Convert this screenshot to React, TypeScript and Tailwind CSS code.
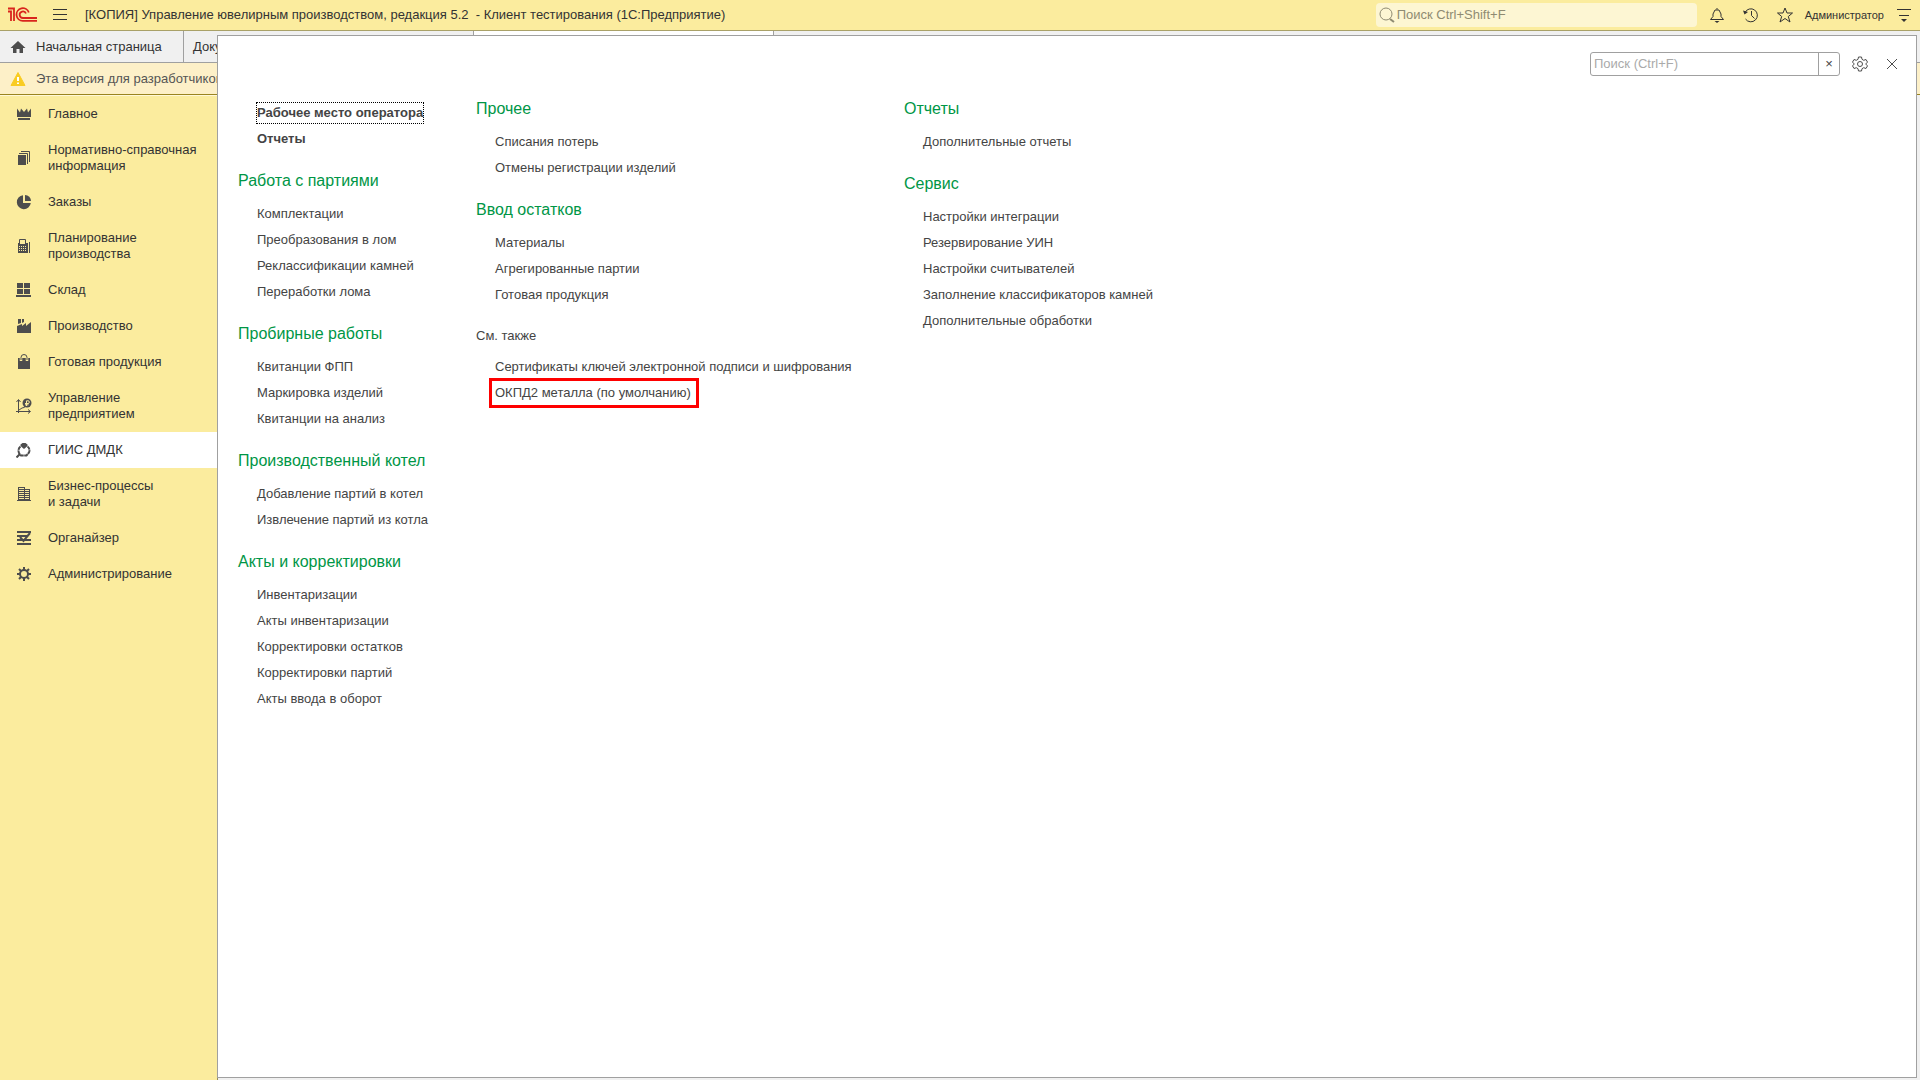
import type { ReactNode } from "react";

type Section = { title?: string; minor?: boolean; bold?: boolean; items: string[] };

const COLUMNS: Section[][] = [
  [
    { bold: true, items: ["Рабочее место оператора", "Отчеты"] },
    {
      title: "Работа с партиями",
      items: ["Комплектации", "Преобразования в лом", "Реклассификации камней", "Переработки лома"],
    },
    { title: "Пробирные работы", items: ["Квитанции ФПП", "Маркировка изделий", "Квитанции на анализ"] },
    { title: "Производственный котел", items: ["Добавление партий в котел", "Извлечение партий из котла"] },
    {
      title: "Акты и корректировки",
      items: [
        "Инвентаризации",
        "Акты инвентаризации",
        "Корректировки остатков",
        "Корректировки партий",
        "Акты ввода в оборот",
      ],
    },
  ],
  [
    { title: "Прочее", items: ["Списания потерь", "Отмены регистрации изделий"] },
    { title: "Ввод остатков", items: ["Материалы", "Агрегированные партии", "Готовая продукция"] },
    {
      title: "См. также",
      minor: true,
      items: ["Сертификаты ключей электронной подписи и шифрования", "ОКПД2 металла (по умолчанию)"],
    },
  ],
  [
    { title: "Отчеты", items: ["Дополнительные отчеты"] },
    {
      title: "Сервис",
      items: [
        "Настройки интеграции",
        "Резервирование УИН",
        "Настройки считывателей",
        "Заполнение классификаторов камней",
        "Дополнительные обработки",
      ],
    },
  ],
];

const FOCUSED = "Рабочее место оператора";
const MARKED = "ОКПД2 металла (по умолчанию)";
const ACTIVE = "ГИИС ДМДК";

const INK = "#4d4d4d";
const PAPER = "#fbec9e";

function Glyph({ children }: { children: ReactNode }) {
  return (
    <svg width="16" height="16" viewBox="0 0 16 16" fill="none" aria-hidden="true" className="shrink-0">
      {children}
    </svg>
  );
}

const NAV: { label: string; icon: ReactNode }[] = [
  {
    label: "Главное",
    icon: <path d="M1 2.5L4 6.5 5 2.5 8 6l3-3.500 1 4 3-4V11H1zM2 12h12v2H2z" fill={INK} />,
  },
  {
    label: "Нормативно-справочная\nинформация",
    icon: (
      <>
        <path d="M2 5h8v10H2z" fill={INK} />
        <path d="M3 3.5h8.500V14M5 1.5h8.500V12" stroke={INK} />
      </>
    ),
  },
  {
    label: "Заказы",
    icon: (
      <>
        <path d="M7 1.200A7 7 0 1 0 14.800 9H7z" fill={INK} />
        <path d="M9 1a6 6 0 0 1 6 6H9z" fill={INK} />
      </>
    ),
  },
  {
    label: "Планирование\nпроизводства",
    icon: (
      <>
        <path d="M3.500 1.500h6V6h-6z" stroke={INK} />
        <path d="M2 5h10v10H2z" fill={INK} />
        <path d="M4 3h5v3H4z" fill={PAPER} />
        <path d="M3 8.500h8M3 10.500h8M3 12.500h8" stroke={PAPER} strokeDasharray="1 1" />
        <path d="M13.500 4v11" stroke={INK} />
      </>
    ),
  },
  {
    label: "Склад",
    icon: <path d="M1 1h6v5H1zM8 1h6v5H8zM1 7h6v5H1zM8 7h6v5H8zM0 13h15v2H0z" fill={INK} />,
  },
  {
    label: "Производство",
    icon: <path d="M1 15V8l5-2v2l4-3v3l5-4v11zM2 1h3v4L2 6zM6 1h2v3l-2 1z" fill={INK} />,
  },
  {
    label: "Готовая продукция",
    icon: (
      <>
        <path d="M2 4h12v11H2z" fill={INK} />
        <path d="M5 7V4a3 3 0 0 1 6 0v3" stroke={PAPER} strokeWidth="2.500" />
        <path d="M5 6V3.500a3 3 0 0 1 6 0V6" stroke={INK} />
      </>
    ),
  },
  {
    label: "Управление\nпредприятием",
    icon: (
      <>
        <path d="M2.500 15V2M.5 4l2-2.500 2 2.500M0 13.500h14M12 11.500l2.500 2-2.500 2M3 12l3-2 2-.5 2-1.500" stroke={INK} />
        <circle cx="11" cy="5" r="4.500" fill={INK} />
        <path d="M10.500 8V2.800H12a1.300 1.300 0 0 1 0 2.700H9M9 6.800h3.500" stroke={PAPER} />
      </>
    ),
  },
  {
    label: ACTIVE,
    icon: (
      <>
        <path d="M4.500 4.500C2.500 6 2 8.500 3 11l2 2.500h5.500l2.500-3c1-2.500.3-4.700-1.500-6" stroke={INK} strokeWidth="2" strokeDasharray="4 .5" />
        <path d="M4.500 2.500L6.500 1h3l2 1.500v1.500L8 7 4.500 4z" fill={INK} />
        <path d="M.5 15.500L4 12" stroke={INK} strokeWidth="2" />
      </>
    ),
  },
  {
    label: "Бизнес-процессы\nи задачи",
    icon: (
      <>
        <path d="M2 1h7v2h5v12H2zM1 14h14v1H1z" fill={INK} />
        <path d="M3 2.500h5M3 4.500h5M3 6.500h5M3 8.500h5M3 10.500h5M3 12.500h5M9 4.500h4M9 6.500h4M9 8.500h4M9 10.500h4M9 12.500h4" stroke={PAPER} />
      </>
    ),
  },
  {
    label: "Органайзер",
    icon: (
      <>
        <path d="M1 2h14M1 6h10M1 10h14M1 14h14" stroke={INK} strokeWidth="2" />
        <path d="M4 7l3.500 4L14 3" stroke={INK} strokeWidth="2" />
      </>
    ),
  },
  {
    label: "Администрирование",
    icon: (
      <>
        <circle cx="8" cy="8" r="4" stroke={INK} strokeWidth="2" />
        <path
          d="M8 1v3M8 12v3M1 8h3M12 8h3M3 3l2 2M11 11l2 2M13 3l-2 2M5 11l-2 2"
          stroke={INK}
          strokeWidth="2"
        />
      </>
    ),
  },
];

function Logo() {
  return (
    <svg width="30" height="16" viewBox="0 0 30 16" fill="none" aria-label="1С" className="shrink-0">
      <g stroke="#d9251d" strokeWidth="1.800">
        <path d="M0 4.500h3V14M0 1.500h6V14" />
        <path d="M20.800 5.500A6.300 6.300 0 1 0 15 13.800h14" />
        <path d="M18 6.500a3.300 3.300 0 1 0-3 4.500h14" />
      </g>
    </svg>
  );
}

function TopBar() {
  return (
    <header className="flex h-[31px] items-center border-b border-[#a9a168] bg-[#fbec9e] px-2 text-[#333]">
      <Logo />
      <button type="button" aria-label="Меню" className="mx-[14px]">
        <Glyph>
          <path d="M1 2.500h14M1 7.500h14M1 12.500h14" stroke="#333" />
        </Glyph>
      </button>
      <h1 className="grow pl-[3px] whitespace-pre">
        [КОПИЯ] Управление ювелирным производством, редакция 5.2{"  "}- Клиент тестирования (1С:Предприятие)
      </h1>
      <label className="flex h-6 w-[321px] items-center gap-0.5 rounded-sm bg-[#fdf6d3] pl-[3px]">
        <Glyph>
          <circle cx="7" cy="7" r="6" stroke="#8f8b72" />
          <path d="M11 12l4 3" stroke="#8f8b72" strokeWidth="2" />
        </Glyph>
        <input
          type="search"
          aria-label="Поиск"
          placeholder="Поиск Ctrl+Shift+F"
          className="w-full bg-transparent outline-none placeholder:text-[#8f8b72]"
        />
      </label>
      <div className="ml-3 flex items-center gap-[18px]">
        <button type="button" aria-label="Уведомления">
          <Glyph>
            <path d="M8 1v1.500M1.500 12.500L4 9.500V7L6 3h4l2 4v2.500l2.500 3z" stroke="#333" />
            <path d="M5.500 14h5L8 16z" fill="#333" />
          </Glyph>
        </button>
        <button type="button" aria-label="История">
          <Glyph>
            <path d="M2 5.500A6.500 6.500 0 1 1 2.500 12M8.500 4v4.500l3 3" stroke="#333" />
            <path d="M0 3.500l1.500 4L5 5z" fill="#333" />
          </Glyph>
        </button>
        <button type="button" aria-label="Избранное">
          <Glyph>
            <path d="M8 1l2 5h5.500L11.300 9.500 13 15l-5-3.500L3 15l1.700-5.500L.5 6H6z" stroke="#333" />
          </Glyph>
        </button>
      </div>
      <button type="button" className="mx-3 text-[11px]">
        Администратор
      </button>
      <button type="button" aria-label="Сервис и настройки">
        <Glyph>
          <path d="M1 2.500h14M3 8.500h10" stroke="#333" />
          <path d="M5 12h6l-3 3z" fill="#333" />
        </Glyph>
      </button>
    </header>
  );
}

function Sidebar() {
  return (
    <nav className="w-[218px] shrink-0 border-t border-r border-t-[#fff8d8] border-r-[#958d5a] bg-[#fbec9e]">
      <ul>
        {NAV.map(({ label, icon }) => (
          <li key={label}>
            <a
              href="#"
              className={`flex items-center gap-4 py-[10px] pl-4 leading-4 whitespace-pre text-[#333] ${
                label === ACTIVE ? "bg-white" : ""
              }`}
            >
              <Glyph>{icon}</Glyph>
              {label}
            </a>
          </li>
        ))}
      </ul>
    </nav>
  );
}

function MenuItem({ label, bold }: { label: string; bold?: boolean }) {
  return (
    <li className="flex h-[26px] items-center">
      <a
        href="#"
        className={`relative leading-5 whitespace-nowrap ${bold ? "font-bold" : ""} ${
          label === FOCUSED ? "outline-1 outline-black outline-dotted" : ""
        }`}
      >
        {label}
        {label === MARKED && (
          <span className="absolute -inset-y-[5px] -right-2 -left-[6px] border-[3px] border-[#fe0000]" />
        )}
      </a>
    </li>
  );
}

function MenuSection({ title, minor, bold, items }: Section) {
  return (
    <section>
      {title && (
        <h2
          className={minor ? "pt-[18px] pb-2 leading-5" : "pt-[19px] pb-[10px] text-base leading-5 text-[#009646]"}
        >
          {title}
        </h2>
      )}
      <ul className="pl-[19px]">
        {items.map((item) => (
          <MenuItem key={item} label={item} bold={bold} />
        ))}
      </ul>
    </section>
  );
}

function FunctionsPanel() {
  return (
    <main className="absolute top-[35px] right-[3px] bottom-0.5 left-[217px] border border-[#a0a0a0] bg-white text-[#444]">
      <div className="flex items-center justify-end pt-4 pr-4">
        <div className="flex h-6 w-[250px] rounded-[3px] border border-[#a0a0a0]">
          <input
            type="text"
            aria-label="Поиск по разделу"
            placeholder="Поиск (Ctrl+F)"
            className="w-0 grow px-[3px] outline-none placeholder:text-[#aaa]"
          />
          <button type="button" aria-label="Очистить" className="w-[21px] border-l border-[#a0a0a0] leading-5">
            ×
          </button>
        </div>
        <button type="button" aria-label="Настройки" className="ml-3">
          <Glyph>
            <path
              d="M6.500 1h3l.5 2.300 1.700 1L14 3.500l1.500 2.600L13.700 8l1.800 1.900-1.500 2.600-2.300-.8-1.700 1-.5 2.300h-3L6 12.700l-1.700-1-2.300.8L.5 9.900 2.300 8 .5 6.100 2 3.500l2.300.8 1.700-1z"
              stroke={INK}
            />
            <circle cx="8" cy="8" r="2.500" stroke={INK} />
          </Glyph>
        </button>
        <button type="button" aria-label="Закрыть" className="ml-4">
          <Glyph>
            <path d="M3 3l10 10M13 3L3 13" stroke={INK} />
          </Glyph>
        </button>
      </div>
      <div className="grid grid-cols-[238px_428px_auto] pt-1 pl-5">
        {COLUMNS.map((sections, i) => (
          <div key={i} className={i === 0 ? "pt-5" : ""}>
            {sections.map((section, j) => (
              <MenuSection key={j} {...section} />
            ))}
          </div>
        ))}
      </div>
    </main>
  );
}

export default function App() {
  return (
    <div className="relative flex min-h-screen flex-col bg-[#f0f0f0] font-['Liberation_Sans',Arial,sans-serif] text-[13px]">
      <TopBar />
      <div className="flex h-8 items-stretch border-b border-[#a0a0a0] text-[#333]">
        <a href="#" className="flex w-[184px] items-center gap-[10px] border-r border-[#a0a0a0] pl-[10px]">
          <Glyph>
            <path d="M8 2L.5 9H3v5h3.500v-4h3v4H13V9h2.500z" fill={INK} />
          </Glyph>
          Начальная страница
        </a>
        <a href="#" className="flex w-[290px] items-center border-r border-[#a0a0a0] pl-[9px]">
          Документы
        </a>
        <a href="#" aria-label="Текущая вкладка" className="w-[300px] border-r border-[#a0a0a0] bg-white" />
      </div>
      <div className="flex h-8 items-center gap-[10px] border-b border-[#9a8420] bg-[#fdf0c8] pl-[10px] text-[#555]">
        <Glyph>
          <path d="M8 1.500L15 14.500H1z" fill="#f9cc22" stroke="#f9cc22" strokeLinejoin="round" />
          <path d="M8 6v4M8 11.500v1.500" stroke="#fff" strokeWidth="2" />
        </Glyph>
        Эта версия для разработчиков
      </div>
      <div className="flex grow">
        <Sidebar />
      </div>
      <FunctionsPanel />
    </div>
  );
}
